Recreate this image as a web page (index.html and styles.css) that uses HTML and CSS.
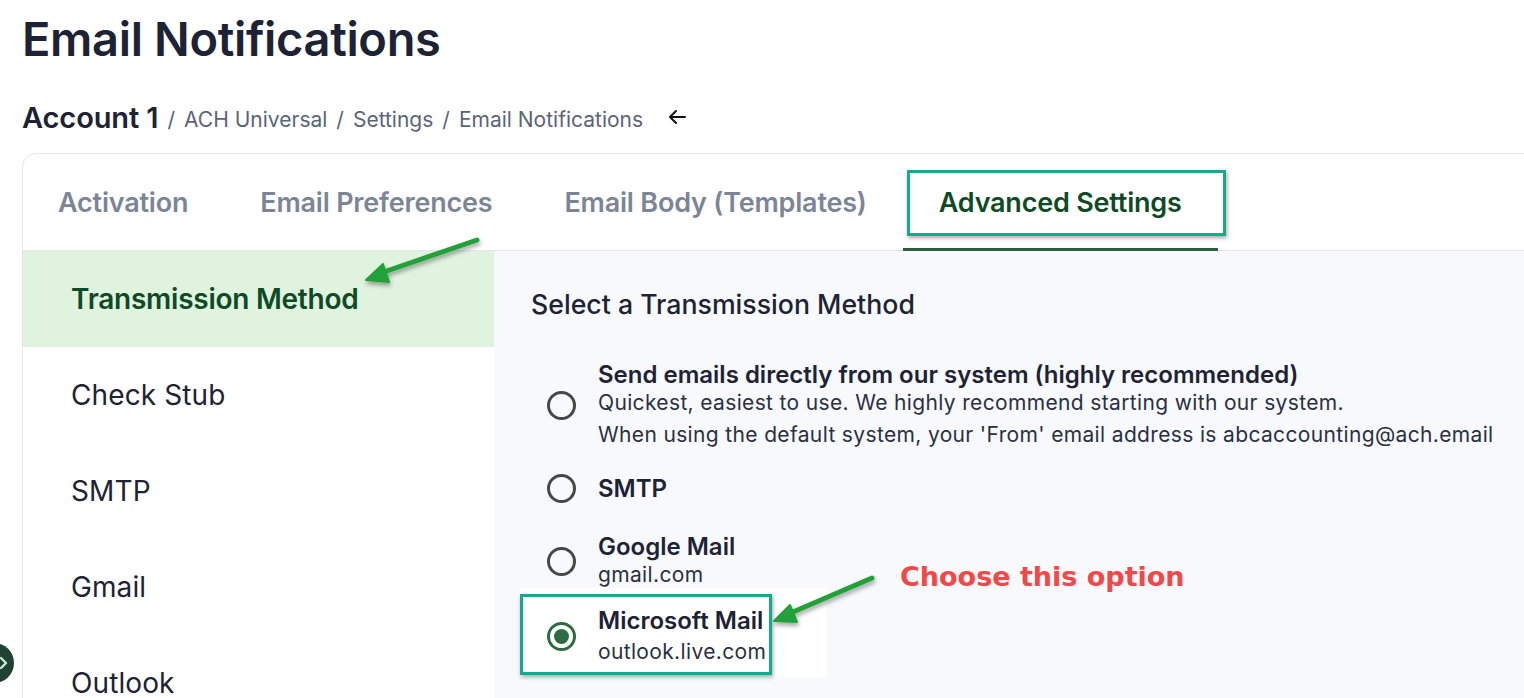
FILE: index.html
```html
<!DOCTYPE html>
<html lang="en">
<head>
<meta charset="utf-8">
<title>Email Notifications</title>
<link rel="stylesheet" href="styles.css">
</head>
<body>
<div class="page">
  <h1 class="title">Email Notifications</h1>
  <nav class="crumbs">
    <span class="crumb-root">Account 1</span>
    <span class="sep">/</span>
    <span class="crumb">ACH Universal</span>
    <span class="sep">/</span>
    <span class="crumb">Settings</span>
    <span class="sep">/</span>
    <span class="crumb">Email Notifications</span>
    <svg class="back" width="20" height="16" viewBox="0 0 20 16" aria-hidden="true"><path d="M18 8H3M9 2L3 8l6 6" fill="none" stroke="#111" stroke-width="2" stroke-linecap="round" stroke-linejoin="round"/></svg>
  </nav>
  <section class="card">
    <div class="tabs">
      <div class="tab">Activation</div>
      <div class="tab">Email Preferences</div>
      <div class="tab">Email Body (Templates)</div>
      <div class="tab active">Advanced Settings<span class="hl-box tab-box"></span></div>
    </div>
    <div class="panel">
      <aside class="side">
        <div class="side-item active">Transmission Method</div>
        <div class="side-item">Check Stub</div>
        <div class="side-item">SMTP</div>
        <div class="side-item">Gmail</div>
        <div class="side-item">Outlook</div>
      </aside>
      <main class="content">
        <h2 class="heading">Select a Transmission Method</h2>
        <div class="options">
          <div class="option opt-first">
            <span class="radio"></span>
            <div class="opt-text">
              <div class="opt-title">Send emails directly from our system (highly recommended)</div>
              <div class="opt-sub">Quickest, easiest to use. We highly recommend starting with our system.</div>
              <div class="opt-sub opt-sub2">When using the default system, your 'From' email address is abcaccounting@ach.email</div>
            </div>
          </div>
          <div class="option opt-smtp">
            <span class="radio"></span>
            <div class="opt-text">
              <div class="opt-title">SMTP</div>
            </div>
          </div>
          <div class="option opt-google">
            <span class="radio"></span>
            <div class="opt-text">
              <div class="opt-title">Google Mail</div>
              <div class="opt-sub">gmail.com</div>
            </div>
          </div>
          <div class="option opt-ms">
            <span class="ms-patch"></span>
            <span class="radio checked"></span>
            <div class="opt-text">
              <div class="opt-title">Microsoft Mail</div>
              <div class="opt-sub opt-sub-ms">outlook.live.com</div>
            </div>
            <span class="hl-box ms-box"></span>
          </div>
        </div>
      </main>
    </div>
  </section>
</div>

<svg class="annot" width="1524" height="698" viewBox="0 0 1524 698" aria-hidden="true">
  <defs>
    <filter id="sh" x="-20%" y="-50%" width="140%" height="200%">
      <feDropShadow dx="1" dy="3" stdDeviation="2" flood-color="#000" flood-opacity="0.35"/>
    </filter>
  </defs>
  <g filter="url(#sh)" fill="#22a13a" stroke="#22a13a" stroke-linecap="round" stroke-linejoin="round">
    <path d="M477 240L378 274" stroke-width="5" fill="none"/>
    <path d="M366 280L383 264L389 282Z" stroke-width="2"/>
    <path d="M872 578L786 615" stroke-width="5" fill="none"/>
    <path d="M774 621L790 605L797 622Z" stroke-width="2"/>
  </g>
</svg>
<div class="callout">Choose this option</div>
<div class="fab"><svg width="14" height="14" viewBox="0 0 14 14" aria-hidden="true"><path d="M4 2l5 5-5 5" fill="none" stroke="#cfe9d6" stroke-width="2.4" stroke-linecap="round" stroke-linejoin="round"/></svg></div>
</body>
</html>
```
FILE: styles.css
```css
* { box-sizing: border-box; }
html, body { margin: 0; padding: 0; }
body {
  font-family: Inter, "Noto Sans", "DejaVu Sans", sans-serif;
  background: #ffffff;
  color: #1e2235;
  width: 1524px;
  height: 698px;
  overflow: hidden;
  position: relative;
}
.page {
  padding: 10px 0 0 22px;
}
.title {
  margin: 0;
  font-size: 47px;
  line-height: 58px;
  font-weight: 600;
  color: #1e2235;
  letter-spacing: -0.35px;
}
.crumbs {
  margin-top: 32px;
  display: flex;
  align-items: baseline;
  gap: 9px;
  height: 34px;
}
.crumb-root {
  font-size: 29px;
  font-weight: 600;
  color: #1e2235;
  letter-spacing: -0.1px;
}
.crumb, .sep {
  font-size: 21px;
  color: #5b6478;
  position: relative;
  top: -1px;
}
.back {
  margin-left: 15px;
  align-self: center;
  position: relative;
  top: 0;
}
.card {
  margin-top: 19px;
  margin-right: -60px;
  border: 1px solid #e4e6eb;
  border-radius: 14px 0 0 0;
  background: #fff;
}
.tabs {
  display: flex;
  height: 97px;
  border-bottom: 1px solid #e4e6eb;
}
.tab {
  position: relative;
  display: flex;
  align-items: center;
  padding: 0 36px 0 36px;
  font-size: 27px;
  font-weight: 600;
  color: #7c8596;
  letter-spacing: -0.2px;
}
.tab:first-child { padding-left: 35px; }
.tab.active { color: #0f4a26; }
.tab.active::after {
  content: "";
  position: absolute;
  left: 0; right: 0; bottom: -1px;
  height: 3px;
  background: #2f5e3c;
}
.hl-box {
  position: absolute;
  border: 3px solid #14ab8c;
  box-shadow: 1px 2px 4px rgba(0,0,0,0.35);
  pointer-events: none;
}
.tab-box {
  left: 4px; right: -8px;
  top: 16px; bottom: 14px;
}
.panel {
  display: flex;
  min-height: 460px;
}
.side {
  width: 471px;
  flex: none;
}
.side-item {
  height: 96px;
  display: flex;
  align-items: center;
  padding-left: 48px;
  font-size: 28px;
  color: #1e2235;
  letter-spacing: 0.1px;
}
.side-item.active {
  background: #dff3df;
  color: #0f4a26;
  font-weight: 600;
  letter-spacing: -0.25px;
}
.content {
  flex: 1;
  background: #f8f9fc;
  padding: 37px 0 0 37px;
}
.heading {
  margin: 0;
  font-size: 26.7px;
  line-height: 32px;
  font-weight: 500;
  color: #1e2235;
}
.options {
  display: flex;
  flex-direction: column;
}
.option {
  position: relative;
  display: flex;
  align-items: center;
  gap: 22px;
  padding-left: 16px;
}
.opt-first { margin-top: 41px; }
.opt-smtp { margin-top: 25px; }
.opt-google { margin-top: 30px; }
.opt-ms { margin-top: 18px; }
.radio {
  position: relative;
  width: 29px;
  height: 29px;
  flex: none;
  border: 3px solid #474747;
  border-radius: 50%;
  z-index: 1;
}
.radio.checked { border-color: #2f6b42; }
.radio.checked::after {
  content: "";
  position: absolute;
  left: 4px; top: 4px;
  width: 15px; height: 15px;
  border-radius: 50%;
  background: #2f6b42;
}
.opt-text { position: relative; z-index: 1; }
.opt-title {
  font-size: 24px;
  line-height: 28px;
  font-weight: 600;
  color: #1e2235;
}
.opt-sub {
  font-size: 21px;
  line-height: 28px;
  color: #2a3042;
  letter-spacing: 0.35px;
}
.opt-sub2 { margin-top: 4px; }
.opt-sub-ms { margin-top: 3px; }
.ms-patch {
  position: absolute;
  left: -11px; top: -19px;
  width: 307px; height: 89px;
  background: #ffffff;
}
.ms-box {
  left: -11px; top: -13px;
  width: 252px; height: 81px;
}
.annot {
  position: absolute;
  left: 0; top: 0;
  pointer-events: none;
}
.callout {
  position: absolute;
  left: 900px;
  top: 558px;
  font-family: "DejaVu Sans", "Open Sans", sans-serif;
  font-size: 27px;
  font-weight: 700;
  color: #f24848;
  line-height: 38px;
}
.fab {
  position: absolute;
  left: -26px;
  top: 643px;
  width: 40px;
  height: 40px;
  border-radius: 50%;
  background: #1f4233;
  display: flex;
  align-items: center;
  justify-content: flex-end;
  padding-right: 3px;
}
```
